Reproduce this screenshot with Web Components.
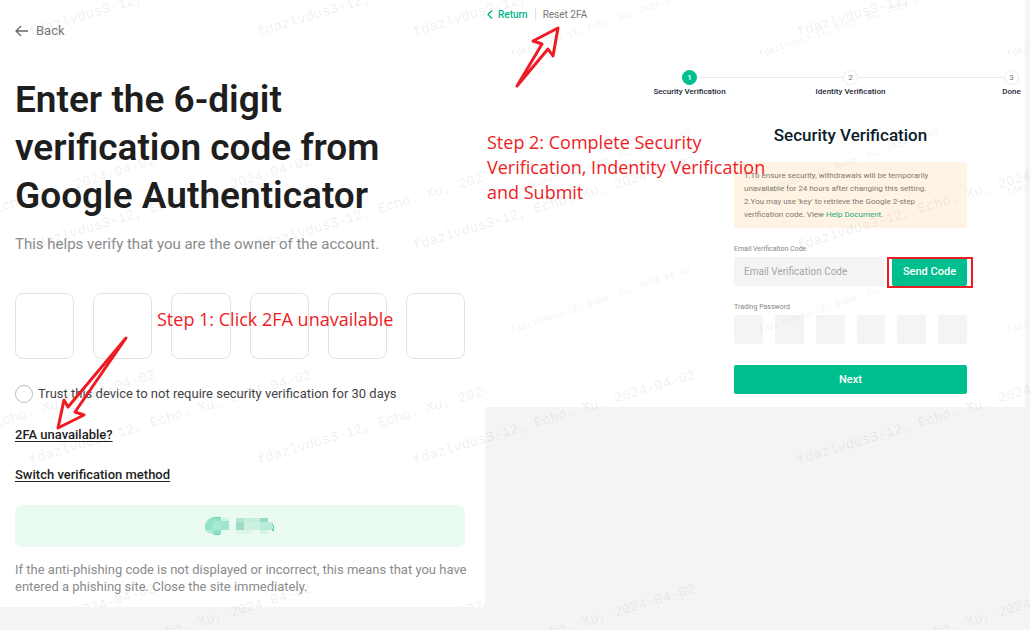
<!DOCTYPE html>
<html lang="en">
<head>
<meta charset="utf-8">
<title>Reset 2FA guide</title>
<style>
  body { margin: 0; background: #f4f4f4; font-family: Roboto, "Liberation Sans", sans-serif; color: #1e1e1e; }
</style>
</head>
<body>
<guide-page></guide-page>
<script>
const define = (name, html, setup) => {
  const template = document.createElement('template');
  template.innerHTML = html;
  customElements.define(name, class extends HTMLElement {
    connectedCallback() {
      if (this.shadowRoot) return;
      const root = this.attachShadow({ mode: 'open' });
      root.append(template.content.cloneNode(true));
      if (setup) setup(this, root);
    }
  });
};

/* Repeating slanted watermark that fills its container. */
define('water-mark', `
<style>
  :host { position: absolute; inset: 0; overflow: hidden; pointer-events: none; color: rgba(90,90,90,.1);
          font: 14px/16px "Liberation Mono", monospace; }
  :host([small]) { font-size: 9px; line-height: 10px; }
  div { display: grid; width: max-content; }
  span { display: block; width: 0; white-space: nowrap; transform: rotate(-17deg); transform-origin: 0 100%; align-self: end; }
  :host([small]) span { transform: rotate(-19deg); }
</style><div></div>`, (host, root) => {
  const n = key => Number(host.getAttribute(key));
  const grid = root.querySelector('div');
  grid.style.gridTemplateColumns = `repeat(${n('cols')}, ${n('dx')}px)`;
  grid.style.gridAutoRows = n('dy') + 'px';
  grid.style.margin = `${n('y') - n('dy')}px 0 0 ${n('x')}px`;
  for (let i = 0; i < n('cols') * n('rows'); i++) {
    const s = document.createElement('span');
    s.textContent = 'fdazlvdus3-12, Echo. Xu, 2024-04-02';
    grid.append(s);
  }
});

/* Row of single-character boxes. */
define('code-boxes', `
<style>
  :host { display: block; }
  div { display: grid; grid-template-columns: repeat(6, minmax(0, 1fr)); gap: 19px; }
  input { box-sizing: border-box; width: 100%; height: 66px; margin: 0; padding: 0; text-align: center;
          border: 1px solid #e3e3e3; border-radius: 8px; background: #fff; font: 24px Roboto, sans-serif; }
  :host([filled]) div { gap: 12px; }
  :host([filled]) input { height: 29px; border: 0; border-radius: 2px; background: #f4f4f4; font-size: 12px; }
</style><div role="group"></div>`, (host, root) => {
  const group = root.querySelector('div');
  group.setAttribute('aria-label', host.getAttribute('label'));
  for (let i = 1; i <= 6; i++) {
    const input = document.createElement('input');
    input.maxLength = 1;
    input.type = host.hasAttribute('filled') ? 'password' : 'text';
    input.setAttribute('aria-label', 'Digit ' + i);
    group.append(input);
  }
});

define('step-item', `
<style>
  :host { display: block; text-align: center; color: #1b2733; font-size: 8px; line-height: 12px; font-weight: 500; white-space: nowrap; }
  .row { display: flex; align-items: center; margin-bottom: 1px; }
  .row::before, .row::after { content: ""; flex: 1; height: 1px; background: #ebebeb; }
  :host([first]) .row::before, :host([last]) .row::after { visibility: hidden; }
  b { box-sizing: border-box; width: 15px; height: 15px; border: 1px solid #ebebeb; border-radius: 50%;
      font-weight: 400; line-height: 13px; color: #777; }
  :host([first]) b { background: #00bf8f; border-color: #00bf8f; color: #fff; font-weight: 500; }
</style><div class="row"><b></b></div><slot></slot>`, (host, root) => {
  root.querySelector('b').textContent = host.getAttribute('number');
});

define('green-button', `
<style>
  :host { display: block; }
  button { display: block; width: 100%; height: 29px; margin: 0; padding: 0; border: 0; border-radius: 2px;
           background: #00bf8f; color: #fff; font: 500 11px/29px Roboto, sans-serif; }
</style><button type="button"><slot></slot></button>`);

define('two-factor-panel', `
<style>
  :host { display: block; position: relative; background: #fff; padding: 22px 20px 12px 15px; }
  .back { display: flex; align-items: center; gap: 8px; width: max-content; font-size: 13px; line-height: 17px; color: #777; text-decoration: none; }
  h1 { margin: 37px 0 14px; font-size: 37px; line-height: 48px; font-weight: 600; max-width: 400px; }
  p { margin: 0 -6px 0 0; color: #8b8b8b; font-size: 13px; line-height: 17px; }
  .lead { font-size: 15px; line-height: 20px; }
  code-boxes { margin: 39px 0 25px; }
  .trust { display: flex; align-items: center; gap: 5px; font-size: 13px; line-height: 20px; color: #444; }
  .trust input { appearance: none; box-sizing: border-box; width: 18px; height: 18px; margin: 0; border: 1px solid #bbb; border-radius: 50%; background: #fff; }
  .link { display: block; width: max-content; margin-top: 20px; font-size: 13px; line-height: 20px; font-weight: 500; color: #1e1e1e; text-underline-offset: 2px; }
  .trust + .link { margin-top: 21px; }
  .phish { display: flex; justify-content: center; align-items: center; height: 42px; margin: 20px 0 14px; border-radius: 8px; background: #e9faf1; }
</style>
<a class="back" href="#back"><svg width="13" height="12" viewBox="0 0 13 12" fill="none" stroke="#666" stroke-width="1.3"><path d="M6 1 1 6l5 5M1 6h12"/></svg>Back</a>
<h1>Enter the 6-digit verification code from Google Authenticator</h1>
<p class="lead">This helps verify that you are the owner of the account.</p>
<code-boxes label="Google Authenticator code"></code-boxes>
<label class="trust"><input type="checkbox">Trust this device to not require security verification for 30 days</label>
<a class="link" href="#unavailable">2FA unavailable?</a>
<a class="link" href="#switch">Switch verification method</a>
<div class="phish">
  <svg width="70" height="18" viewBox="0 0 70 18" role="img" aria-label="Hidden anti-phishing code">
    <path d="M8 0h8v4H2Q4 1 8 0" fill="#8fe3c8"/><path d="M16 1h8v4h-8z" fill="#cff3e4"/>
    <path d="M2 4h6v9H0V8Q0 6 2 4" fill="#94e2c9"/><path d="M8 4h8v9H8z" fill="#a6ead4"/><path d="M16 4h8v9h-8z" fill="#9ce6cf"/>
    <path d="M0 13h8v4Q2 16 0 13" fill="#ade9d5"/><path d="M8 13h8v4H8z" fill="#8be1c6"/><path d="M9 0h6v1H9zM9 17h6v1H9z" fill="#5ed4b1"/>
    <path d="M31 1h8v4h-8z" fill="#b4e7d3"/><path d="M39 1h16v4H39z" fill="#c2eedf"/><path d="M55 1h8v4h-8z" fill="#96ddc5"/>
    <path d="M31 5h8v8h-8z" fill="#a0dcc5"/><path d="M39 5h8v8h-8z" fill="#d1f0dc"/><path d="M47 5h8v8h-8z" fill="#c8f1e2"/><path d="M55 5h12l1 8H55z" fill="#b8ebd9"/>
    <path d="M31 13h16v4H31z" fill="#daf4e8"/><path d="M55 13h8v4h-8z" fill="#d4f3e5"/><path d="M67 6l2 3v4h-1V9l-1-1zM67 12h2v2h-2z" fill="#64cbb0"/>
  </svg>
</div>
<p>If the anti-phishing code is not displayed or incorrect, this means that you have entered a phishing site. Close the site immediately.</p>
<water-mark x="-124" y="40" dx="384" dy="214" cols="2" rows="4"></water-mark>`);

define('reset-panel', `
<style>
  :host { display: block; position: relative; background: #fff; padding: 8px 0 13px 2px; overflow: hidden; }
  nav { display: flex; align-items: center; font-size: 10px; line-height: 13px; color: #777; }
  nav a { display: flex; align-items: center; gap: 5px; color: #00b587; font-weight: 500; text-decoration: none; padding-right: 7px; margin-right: 7px; border-right: 1px solid #e3e3e3; }
  .steps { display: grid; grid-template-columns: repeat(3, 161px); margin: 49px 0 0 122px; width: max-content; }
  form { width: 233px; margin: 0 58px 0 auto; }
  h2 { margin: 25px 0 15px; font-size: 17px; line-height: 24px; font-weight: 500; text-align: center; color: #0b1c2a; white-space: nowrap; }
  .notice { margin: 0; padding: 7px 10px; border-radius: 2px; background: #fff3e4; color: #80796f; font-size: 8px; line-height: 13px; white-space: nowrap; }
  .notice a { color: #1fa77f; text-decoration: none; }
  .label { display: block; font-size: 7px; line-height: 10px; color: #858585; margin: 16px 0 3px; }
  .email { display: grid; grid-template-columns: minmax(0, 1fr) 75px; gap: 7px; }
  .email input { box-sizing: border-box; width: 100%; height: 29px; margin: 0; padding: 0 10px; border: 0; border-radius: 2px; background: #f4f4f4; font: 10px Roboto, sans-serif; }
  input::placeholder { color: #a3a7ac; opacity: 1; }
  green-button.next { margin-top: 21px; }
</style>
<nav aria-label="Breadcrumb"><a href="#return"><svg width="6" height="9" viewBox="0 0 6 9" fill="none" stroke="#00b587" stroke-width="1.3"><path d="M5 .5 1 4.500l4 4"/></svg>Return</a><span>Reset 2FA</span></nav>
<div class="steps"><step-item first number="1">Security Verification</step-item><step-item number="2">Identity Verification</step-item><step-item last number="3">Done</step-item></div>
<form>
  <h2>Security Verification</h2>
  <p class="notice">1.To ensure security, withdrawals will be temporarily<br>unavailable for 24 hours after changing this setting.<br>2.You may use 'key' to retrieve the Google 2-step<br>verification code. View <a href="#help">Help Document</a>.</p>
  <label class="label" for="email">Email Verification Code</label>
  <div class="email"><input id="email" placeholder="Email Verification Code"><green-button>Send Code</green-button></div>
  <span class="label">Trading Password</span>
  <code-boxes filled label="Trading Password"></code-boxes>
  <green-button class="next">Next</green-button>
</form>
<water-mark small x="28" y="60" dx="248" dy="138" cols="3" rows="3"></water-mark>`);

/* Red notes and arrows drawn over the two screens. */
define('red-notes', `
<style>
  :host { position: absolute; inset: 0; pointer-events: none; color: #ed1c24; font: 18px/25px "Open Sans", "Noto Sans", sans-serif; }
  svg { position: absolute; left: 0; top: 0; }
  p { position: absolute; margin: 0; white-space: nowrap; }
  .one { left: 157px; top: 307px; }
  .two { left: 487px; top: 130px; }
  .frame { position: absolute; box-sizing: border-box; left: 887px; top: 257px; width: 86px; height: 31px; border: 2px solid #ed1c24; }
</style>
<svg width="600" height="440" viewBox="0 0 600 440" fill="none" stroke="#ed1c24" stroke-width="3" stroke-linecap="round" stroke-linejoin="round">
  <path d="M126 338 68 407 64 400 58 428 84 415 75 412Z"/>
  <path d="M517 86 542 44 533 41 558 28 553 56 548 49Z"/>
</svg>
<p class="one">Step 1: Click 2FA unavailable</p>
<p class="two">Step 2: Complete Security<br>Verification, Indentity Verification<br>and Submit</p>
<div class="frame"></div>`);

define('guide-page', `
<style>
  :host { display: grid; position: relative; grid-template-columns: minmax(0, 485fr) minmax(0, 540fr); align-items: start;
          box-sizing: border-box; min-height: 100vh; padding-right: 5px; overflow: hidden; }
</style>
<two-factor-panel></two-factor-panel>
<reset-panel></reset-panel>
<water-mark x="32" y="40" dx="384" dy="214" cols="3" rows="4"></water-mark>
<red-notes></red-notes>`);
</script>
</body>
</html>
